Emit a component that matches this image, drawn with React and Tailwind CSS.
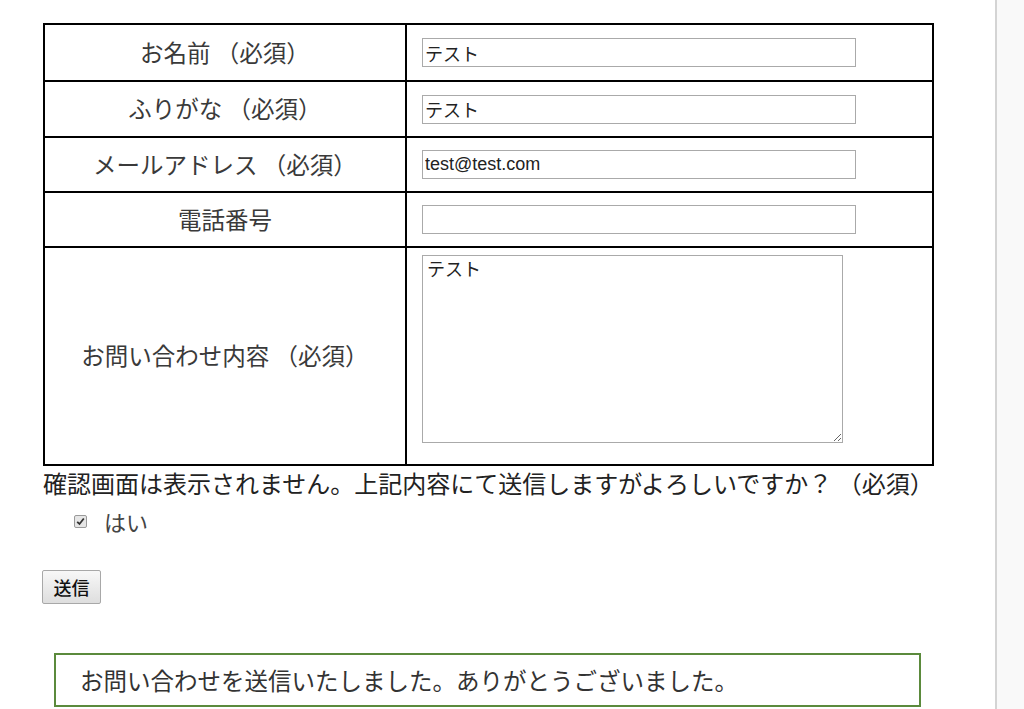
import React from "react";

const JP = { fontFamily: '"Noto Sans CJK JP", "Noto Sans", sans-serif' };
const INPUT_FONT = { fontFamily: '"Liberation Sans", "Noto Sans CJK JP", sans-serif' };

function Row({ label, h, last, children, top }) {
  return (
    <div
      className={`flex ${last ? "" : "border-b-2 border-black"}`}
      style={{ height: h }}
    >
      <div className="w-[362px] shrink-0 border-r-2 border-black flex items-center justify-center text-[23.5px] text-[#3a3a3a] leading-none whitespace-pre">
        {label}
      </div>
      <div className={`flex-1 flex ${top ? "items-start" : "items-center"} pl-[15px]`}>
        {children}
      </div>
    </div>
  );
}

function TextInput({ value }) {
  return (
    <input
      readOnly
      value={value}
      className="w-[434px] h-[29px] border border-[#aaaaaa] bg-white px-[2px] text-[18px] text-[#222] outline-none"
      style={INPUT_FONT}
    />
  );
}

export default function App() {
  return (
    <div className="flex min-h-[709px] w-[1024px] bg-white" style={JP}>
      <div className="w-[995px] shrink-0 pt-[23px] pl-[43px]">
        <div className="w-[891px] border-2 border-black bg-white">
          <Row label="お名前 （必須）" h={57}>
            <TextInput value="テスト" />
          </Row>
          <Row label="ふりがな （必須）" h={56}>
            <TextInput value="テスト" />
          </Row>
          <Row label="メールアドレス （必須）" h={55}>
            <TextInput value="test@test.com" />
          </Row>
          <Row label="電話番号" h={55}>
            <TextInput value="" />
          </Row>
          <Row label="お問い合わせ内容 （必須）" h={216} last top>
            <textarea
              readOnly
              defaultValue="テスト"
              className="mt-[7px] w-[421px] h-[188px] border border-[#aaaaaa] bg-white px-[4px] py-[1px] text-[18px] leading-[26px] text-[#222] outline-none"
              style={INPUT_FONT}
            />
          </Row>
        </div>

        <p className="mt-0 text-[24px] leading-[34px] text-[#222] whitespace-nowrap">
          確認画面は表示されません。上記内容にて送信しますがよろしいですか？ （必須）
        </p>

        <div className="mt-[4px] ml-[31px] flex items-center h-[34px]">
          <span className="w-[13px] h-[13px] border border-[#9a9a9a] bg-[#e6e6e6] rounded-[2px] flex items-center justify-center">
            <svg width="9" height="9" viewBox="0 0 9 9">
              <path d="M1.2 4.8 L3.5 7 L7.8 1.5" fill="none" stroke="#333" strokeWidth="1.8" />
            </svg>
          </span>
          <span className="ml-[17px] text-[22px] text-[#444] leading-none">はい</span>
        </div>

        <button className="mt-[32px] -ml-[1px] w-[59px] h-[34px] border border-[#a8a8a8] rounded-[2px] bg-gradient-to-b from-[#f8f8f8] to-[#dedede] text-[18px] font-medium text-[#111] leading-none">
          送信
        </button>

        <div className="mt-[49px] ml-[11px] w-[867px] border-2 border-[#5b8a3c] pl-[24px] py-[8px] text-[23.5px] leading-[34px] text-[#333]">
          お問い合わせを送信いたしました。ありがとうございました。
        </div>
      </div>
      <div className="flex-1 border-l-2 border-[#d4d4d4] bg-[#f9f9f9]" />
    </div>
  );
}
